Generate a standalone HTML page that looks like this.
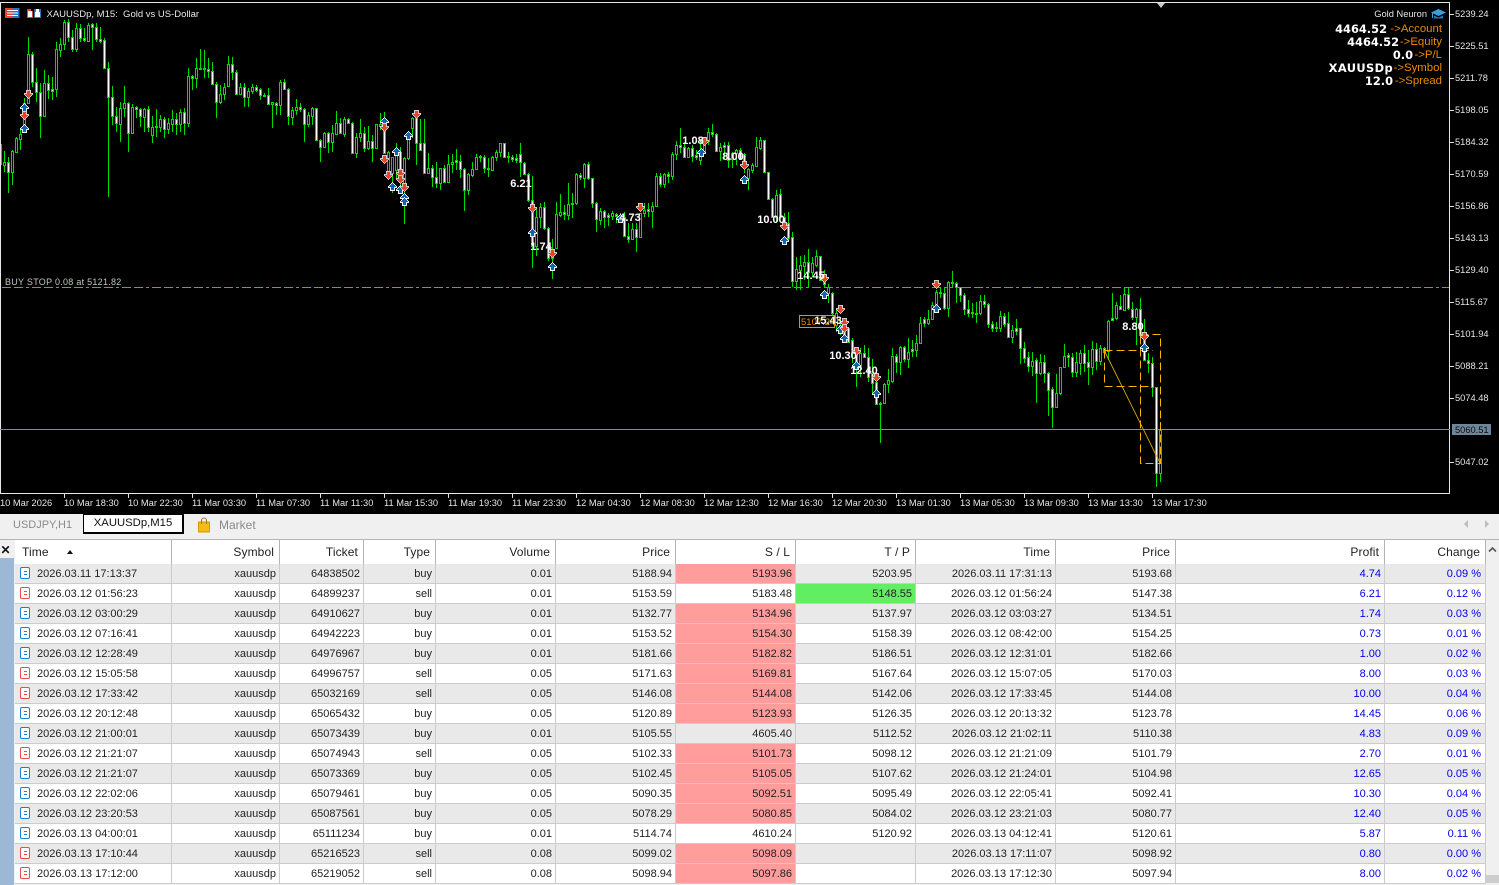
<!DOCTYPE html>
<html><head><meta charset="utf-8"><title>XAUUSDp M15</title>
<style>
html,body{margin:0;padding:0;width:1499px;height:885px;overflow:hidden;background:#f0f0f0;font-family:"Liberation Sans",Arial,sans-serif}
#chart{position:absolute;left:0;top:0}
svg text{font-family:"Liberation Sans",Arial,sans-serif}
.tab{position:absolute;font-size:11px;line-height:14px}
#active{position:absolute;left:83px;top:514px;width:98px;height:17px;background:#fff;border:1px solid #000;border-right-width:2px;border-bottom-width:2px;text-align:center;font-size:11.3px;line-height:17px;color:#111}
#side{position:absolute;left:0;top:558px;width:14px;height:327px;background:#9cb8d6}
#x{position:absolute;left:0;top:540px;width:11px;text-align:center;font-size:12px;font-weight:bold;color:#111;line-height:20px;margin-left:0}
#tblwrap{position:absolute;left:15px;top:539px;width:1471px;height:346px;overflow:hidden}
table{border-collapse:separate;border-spacing:0;table-layout:fixed;width:1471px;font-size:11px;color:#222}
th{height:24px;padding:0 5px 0 0;border-top:1px solid #b4b4b4;border-right:1px solid #b4b4b4;background:#fff;font-weight:normal;font-size:12px;letter-spacing:.1px;text-align:right;color:#222;box-sizing:content-box}
td{height:17px;padding:2px 3px 0 0;border-right:1px solid #ccc;border-bottom:1px solid #ccc;text-align:right;white-space:nowrap;line-height:17px;overflow:hidden}
tr:nth-child(odd) td{background:#e9e9e9}
tr:nth-child(even) td{background:#fff}
td.t{text-align:left;padding-left:22px;position:relative}
td.c{padding-right:4px}
th.t{text-align:left;padding-left:7px;position:relative}
th.t:after{content:"";position:absolute;left:52px;top:10px;border-left:3px solid transparent;border-right:3px solid transparent;border-bottom:4px solid #111}
i{position:absolute;left:5px;top:3px;width:8px;height:10px;border:1.5px solid #1e7fd0;border-radius:2px;background:#fff}
i:before,i:after{content:"";position:absolute;left:2.5px;width:3px;height:1px;background:#1e7fd0}
i:before{top:3px}i:after{top:6px}
i.r{border-color:#e84a4a}i.r:before,i.r:after{background:#e84a4a}
tr td.s{background:#ff9c9c}
tr td.g{background:#62ee62}
td.b{color:#0000f0}
#sb{position:absolute;left:1486px;top:540px;width:13px;height:345px;background:#f0f0f0}
#sb b{position:absolute;left:0;top:335px;width:13px;height:8px;background:#cdcdcd}
</style></head><body>
<svg id="chart" width="1499" height="514" viewBox="0 0 1499 514">
<defs>
<g id="up" shape-rendering="crispEdges"><path d="M0-4H1V-3H2V-2H3V-1H4V0H5V2H3V5H-2V2H-4V0H-3V-1H-2V-2H-1V-3H0Z" fill="#eef2fa"/><path d="M0-3H1V-2H2V-1H3V0H4V1H2V4H-1V1H-3V0H-2V-1H-1V-2H0Z" fill="#1565ad"/></g>
<g id="dn" shape-rendering="crispEdges"><path d="M-2-4H3V-1H5V1H4V2H3V3H2V4H1V5H0V4H-1V3H-2V2H-3V1H-4V-1H-2Z" fill="#d8ccc8"/><path d="M-1-3H2V0H4V1H3V2H2V3H1V4H0V3H-1V2H-2V1H-3V0H-1Z" fill="#e4472a"/></g>
</defs>
<rect width="1499" height="514" fill="#000"/>
<path d="M.5 2.5H1449.5V493.5H.5Z" fill="none" stroke="#e6e6e6"/>
<path d="M0 429.5H1450" stroke="#7e8a94" fill="none"/>
<path d="M2 287.5H1449" stroke="#28c828" stroke-dasharray="9 3 9 3 3 3" fill="none"/>
<g shape-rendering="crispEdges" fill="none" stroke="#00dc00">
<path d="M1.5 144V165M4.5 151V172M8.5 157V193M12.5 150V185M16.5 137V152M20.5 130V150M24.5 98V132M28.5 37V103M32.5 52V87M36.5 68V102M40.5 83V138M44.5 70V117M48.5 75V99M52.5 77V100M56.5 42V97M60.5 38V57M64.5 20V50M68.5 19V42M72.5 30V52M76.5 23V52M80.5 24V42M84.5 28V42M88.5 23V42M92.5 23V50M96.5 23V42M100.5 27V43M104.5 38V68M108.5 62V197M112.5 86V125M116.5 107V132M120.5 102V142M124.5 86V117M128.5 102V152M132.5 104V133M136.5 106V118M140.5 108V127M144.5 108V132M148.5 106V132M152.5 116V143M156.5 109V137M160.5 115V132M164.5 117V138M168.5 118V134M172.5 110V132M176.5 113V135M180.5 109V132M184.5 108V135M188.5 68V127M192.5 75V90M196.5 58V88M200.5 49V70M204.5 50V78M208.5 58V78M212.5 62V85M216.5 82V118M220.5 85V104M224.5 83V100M228.5 56V87M232.5 57V80M236.5 70V95M240.5 83V95M244.5 83V107M248.5 88V107M252.5 84V94M256.5 85V92M260.5 88V100M264.5 93V97M268.5 88V105M272.5 102V128M276.5 102V115M280.5 80V115M284.5 79V90M288.5 88V125M292.5 107V125M296.5 99V115M300.5 103V112M304.5 108V142M308.5 112V127M312.5 107V125M316.5 108V141M320.5 139V162M324.5 132V148M328.5 132V153M332.5 125V152M336.5 111V134M340.5 118V133M344.5 117V137M348.5 118V124M352.5 122V153M356.5 133V158M360.5 119V142M364.5 127V152M368.5 126V150M372.5 135V162M376.5 125V149M380.5 113V130M384.5 112V153M388.5 151V180M392.5 157V193M396.5 143V180M400.5 147V190M404.5 157V224M408.5 132V160M412.5 117V138M416.5 112V165M420.5 119V151M424.5 119V173M428.5 153V173M432.5 165V187M436.5 162V188M440.5 168V190M444.5 165V183M448.5 155V182M452.5 154V173M456.5 149V170M460.5 155V178M464.5 168V211M468.5 173V195M472.5 162V177M476.5 154V170M480.5 155V162M484.5 155V173M488.5 158V177M492.5 156V171M496.5 150V161M500.5 143V157M504.5 143V157M508.5 152V163M512.5 155V162M516.5 154V163M520.5 143V177M524.5 162V175M528.5 173V202M532.5 176V268M536.5 207V256M540.5 203V228M544.5 202V230M548.5 227V261M552.5 239V279M556.5 202V248M560.5 194V217M564.5 205V220M568.5 183V220M572.5 193V218M576.5 173V205M580.5 173V180M584.5 163V188M588.5 162V180M592.5 178V208M596.5 202V232M600.5 208V225M604.5 210V228M608.5 213V226M612.5 211V220M616.5 213V223M620.5 213V222M624.5 212V237M628.5 223V243M632.5 223V240M636.5 223V252M640.5 213V238M644.5 203V217M648.5 203V217M652.5 202V228M656.5 173V207M660.5 173V187M664.5 173V188M668.5 172V183M672.5 152V180M676.5 141V160M680.5 128V153M684.5 142V158M688.5 147V158M692.5 145V162M696.5 150V160M700.5 140V165M704.5 140V153M708.5 128V145M712.5 124V137M716.5 133V152M720.5 143V161M724.5 142V159M728.5 142V168M732.5 152V168M736.5 149V165M740.5 148V160M744.5 153V173M748.5 168V190M752.5 163V173M756.5 137V166M760.5 137V150M764.5 140V172M768.5 172V200M772.5 198V218M776.5 190V222M780.5 189V218M784.5 213V230M788.5 212V242M792.5 232V287M796.5 257V290M800.5 256V290M804.5 255V280M808.5 249V288M812.5 257V277M816.5 250V267M820.5 256V280M824.5 270V287M828.5 284V303M832.5 292V315M836.5 308V332M840.5 318V335M844.5 323V342M848.5 327V343M852.5 338V363M856.5 350V387M860.5 348V377M864.5 345V358M868.5 348V382M872.5 359V393M876.5 377V405M880.5 402V443M884.5 383V404M888.5 369V393M892.5 348V383M896.5 354V373M900.5 346V375M904.5 346V362M908.5 338V368M912.5 340V357M916.5 335V357M920.5 317V343M924.5 317V327M928.5 310V325M932.5 302V320M936.5 290V310M940.5 288V298M944.5 288V310M948.5 281V317M952.5 271V288M956.5 282V303M960.5 287V302M964.5 293V315M968.5 300V317M972.5 303V318M976.5 302V323M980.5 295V315M984.5 295V308M988.5 303V328M992.5 321V332M996.5 322V332M1000.5 311V332M1004.5 313V327M1008.5 312V338M1012.5 325V343M1016.5 319V335M1020.5 328V364M1024.5 342V363M1028.5 352V372M1032.5 352V376M1036.5 358V403M1040.5 354V375M1044.5 355V383M1048.5 372V416M1052.5 387V428M1056.5 374V408M1060.5 367V395M1064.5 344V367M1068.5 353V367M1072.5 353V377M1076.5 352V377M1080.5 350V375M1084.5 345V372M1088.5 350V385M1092.5 341V375M1096.5 343V370M1100.5 345V365M1104.5 347V357M1108.5 320V360M1112.5 293V321M1116.5 302V320M1120.5 295V310M1124.5 287V311M1128.5 287V310M1132.5 302V320M1136.5 308V345M1140.5 298V335M1144.5 319V360M1148.5 353V373M1152.5 357V397M1156.5 387V487M1160.5 422V482"/>
<path fill="#000" d="M3.5 162.5h2v3h-2zM11.5 151.5h2v21h-2zM15.5 138.5h2v14h-2zM19.5 134.5h2v5h-2zM23.5 103.5h2v25h-2zM27.5 54.5h2v49h-2zM43.5 83.5h2v33h-2zM55.5 49.5h2v40h-2zM59.5 44.5h2v6h-2zM63.5 22.5h2v22h-2zM75.5 28.5h2v21h-2zM87.5 25.5h2v16h-2zM119.5 108.5h2v16h-2zM123.5 103.5h2v5h-2zM131.5 107.5h2v26h-2zM143.5 109.5h2v8h-2zM151.5 127.5h2v8h-2zM159.5 119.5h2v8h-2zM167.5 123.5h2v6h-2zM171.5 119.5h2v5h-2zM179.5 112.5h2v12h-2zM187.5 76.5h2v47h-2zM195.5 68.5h2v10h-2zM219.5 94.5h2v8h-2zM223.5 87.5h2v7h-2zM227.5 64.5h2v22h-2zM239.5 87.5h2v7h-2zM247.5 91.5h2v6h-2zM251.5 87.5h2v4h-2zM271.5 102.5h2v2h-2zM279.5 82.5h2v23h-2zM291.5 110.5h2v7h-2zM295.5 107.5h2v3h-2zM307.5 115.5h2v9h-2zM311.5 108.5h2v8h-2zM323.5 133.5h2v14h-2zM331.5 133.5h2v9h-2zM335.5 123.5h2v11h-2zM343.5 119.5h2v15h-2zM355.5 137.5h2v16h-2zM359.5 133.5h2v4h-2zM367.5 141.5h2v7h-2zM375.5 124.5h2v24h-2zM379.5 124.5h2v2h-2zM387.5 152.5h2v23h-2zM391.5 157.5h2v16h-2zM395.5 152.5h2v18h-2zM403.5 158.5h2v29h-2zM407.5 135.5h2v23h-2zM411.5 118.5h2v10h-2zM427.5 168.5h2v5h-2zM439.5 168.5h2v15h-2zM447.5 164.5h2v18h-2zM451.5 162.5h2v2h-2zM467.5 174.5h2v16h-2zM471.5 169.5h2v6h-2zM475.5 157.5h2v12h-2zM491.5 157.5h2v13h-2zM495.5 152.5h2v5h-2zM499.5 143.5h2v9h-2zM535.5 217.5h2v29h-2zM539.5 207.5h2v10h-2zM555.5 214.5h2v34h-2zM559.5 212.5h2v3h-2zM567.5 204.5h2v11h-2zM575.5 174.5h2v29h-2zM583.5 164.5h2v14h-2zM599.5 211.5h2v9h-2zM611.5 213.5h2v3h-2zM631.5 229.5h2v10h-2zM639.5 213.5h2v24h-2zM643.5 210.5h2v3h-2zM651.5 206.5h2v5h-2zM655.5 176.5h2v30h-2zM663.5 174.5h2v10h-2zM671.5 154.5h2v22h-2zM675.5 145.5h2v9h-2zM687.5 148.5h2v9h-2zM699.5 150.5h2v10h-2zM703.5 143.5h2v8h-2zM707.5 132.5h2v9h-2zM719.5 147.5h2v4h-2zM731.5 153.5h2v6h-2zM735.5 150.5h2v3h-2zM747.5 169.5h2v9h-2zM751.5 165.5h2v5h-2zM755.5 147.5h2v19h-2zM759.5 140.5h2v8h-2zM775.5 195.5h2v22h-2zM795.5 269.5h2v12h-2zM799.5 265.5h2v5h-2zM803.5 262.5h2v4h-2zM811.5 263.5h2v9h-2zM815.5 256.5h2v9h-2zM827.5 287.5h2v6h-2zM835.5 313.5h2v12h-2zM859.5 353.5h2v13h-2zM883.5 384.5h2v19h-2zM887.5 380.5h2v4h-2zM891.5 356.5h2v25h-2zM899.5 347.5h2v15h-2zM907.5 352.5h2v7h-2zM915.5 343.5h2v7h-2zM919.5 323.5h2v20h-2zM927.5 319.5h2v4h-2zM931.5 305.5h2v14h-2zM935.5 292.5h2v13h-2zM947.5 282.5h2v26h-2zM979.5 301.5h2v12h-2zM999.5 316.5h2v12h-2zM1011.5 330.5h2v7h-2zM1031.5 361.5h2v5h-2zM1039.5 362.5h2v11h-2zM1055.5 393.5h2v14h-2zM1059.5 367.5h2v26h-2zM1063.5 356.5h2v11h-2zM1075.5 362.5h2v10h-2zM1079.5 353.5h2v10h-2zM1091.5 349.5h2v18h-2zM1099.5 348.5h2v13h-2zM1107.5 321.5h2v30h-2zM1115.5 305.5h2v13h-2zM1123.5 294.5h2v16h-2zM1135.5 309.5h2v8h-2zM1159.5 430.5h2v43h-2z"/>
<path fill="#fff" d="M7.5 162.5h2v10h-2zM31.5 54.5h2v28h-2zM35.5 82.5h2v10h-2zM39.5 92.5h2v24h-2zM47.5 83.5h2v7h-2zM51.5 89.5h2v2h-2zM67.5 22.5h2v15h-2zM71.5 37.5h2v12h-2zM79.5 28.5h2v10h-2zM83.5 38.5h2v2h-2zM91.5 24.5h2v3h-2zM95.5 27.5h2v12h-2zM99.5 39.5h2v2h-2zM103.5 40.5h2v28h-2zM107.5 68.5h2v29h-2zM111.5 97.5h2v19h-2zM115.5 116.5h2v7h-2zM127.5 103.5h2v30h-2zM135.5 107.5h2v2h-2zM139.5 109.5h2v7h-2zM147.5 109.5h2v18h-2zM155.5 126.5h2v1h-2zM163.5 119.5h2v10h-2zM175.5 119.5h2v5h-2zM183.5 112.5h2v11h-2zM191.5 76.5h2v2h-2zM199.5 68.5h2v1h-2zM203.5 68.5h2v1h-2zM207.5 69.5h2v2h-2zM211.5 71.5h2v13h-2zM215.5 84.5h2v18h-2zM231.5 64.5h2v8h-2zM235.5 72.5h2v22h-2zM243.5 87.5h2v10h-2zM255.5 87.5h2v3h-2zM259.5 89.5h2v6h-2zM263.5 95.5h2v1h-2zM267.5 95.5h2v9h-2zM275.5 103.5h2v2h-2zM283.5 82.5h2v7h-2zM287.5 89.5h2v27h-2zM299.5 107.5h2v2h-2zM303.5 109.5h2v15h-2zM315.5 108.5h2v32h-2zM319.5 140.5h2v7h-2zM327.5 133.5h2v9h-2zM339.5 123.5h2v10h-2zM347.5 119.5h2v4h-2zM351.5 123.5h2v30h-2zM363.5 133.5h2v15h-2zM371.5 141.5h2v7h-2zM383.5 126.5h2v27h-2zM399.5 152.5h2v21h-2zM415.5 115.5h2v28h-2zM419.5 143.5h2v7h-2zM423.5 143.5h2v30h-2zM431.5 168.5h2v9h-2zM435.5 177.5h2v6h-2zM443.5 168.5h2v14h-2zM455.5 160.5h2v2h-2zM459.5 161.5h2v8h-2zM463.5 169.5h2v21h-2zM479.5 156.5h2v1h-2zM483.5 157.5h2v11h-2zM487.5 168.5h2v1h-2zM503.5 143.5h2v14h-2zM507.5 156.5h2v1h-2zM511.5 157.5h2v2h-2zM515.5 158.5h2v2h-2zM519.5 154.5h2v8h-2zM523.5 163.5h2v11h-2zM527.5 174.5h2v26h-2zM531.5 200.5h2v46h-2zM543.5 207.5h2v21h-2zM547.5 228.5h2v30h-2zM551.5 257.5h2v1h-2zM563.5 212.5h2v2h-2zM571.5 203.5h2v1h-2zM579.5 175.5h2v2h-2zM587.5 164.5h2v14h-2zM591.5 178.5h2v25h-2zM595.5 203.5h2v16h-2zM603.5 211.5h2v6h-2zM607.5 215.5h2v2h-2zM615.5 214.5h2v2h-2zM619.5 215.5h2v1h-2zM623.5 217.5h2v19h-2zM627.5 236.5h2v3h-2zM635.5 229.5h2v8h-2zM647.5 209.5h2v2h-2zM659.5 176.5h2v8h-2zM667.5 174.5h2v2h-2zM679.5 145.5h2v2h-2zM683.5 147.5h2v10h-2zM691.5 148.5h2v8h-2zM695.5 155.5h2v2h-2zM711.5 132.5h2v2h-2zM715.5 134.5h2v17h-2zM723.5 145.5h2v2h-2zM727.5 145.5h2v15h-2zM739.5 150.5h2v9h-2zM743.5 154.5h2v14h-2zM763.5 140.5h2v32h-2zM767.5 172.5h2v27h-2zM771.5 199.5h2v18h-2zM779.5 194.5h2v23h-2zM783.5 217.5h2v6h-2zM787.5 223.5h2v15h-2zM791.5 237.5h2v44h-2zM807.5 262.5h2v10h-2zM819.5 256.5h2v24h-2zM823.5 280.5h2v4h-2zM831.5 293.5h2v20h-2zM839.5 325.5h2v7h-2zM843.5 328.5h2v10h-2zM847.5 328.5h2v14h-2zM851.5 340.5h2v13h-2zM855.5 353.5h2v10h-2zM863.5 353.5h2v4h-2zM867.5 357.5h2v20h-2zM871.5 373.5h2v10h-2zM875.5 382.5h2v22h-2zM879.5 403.5h2v1h-2zM895.5 356.5h2v6h-2zM903.5 347.5h2v12h-2zM911.5 349.5h2v2h-2zM923.5 319.5h2v4h-2zM939.5 292.5h2v1h-2zM943.5 293.5h2v15h-2zM951.5 282.5h2v1h-2zM955.5 283.5h2v4h-2zM959.5 287.5h2v8h-2zM963.5 295.5h2v14h-2zM967.5 309.5h2v4h-2zM971.5 312.5h2v1h-2zM975.5 313.5h2v1h-2zM983.5 301.5h2v3h-2zM987.5 304.5h2v20h-2zM991.5 324.5h2v4h-2zM995.5 327.5h2v1h-2zM1003.5 316.5h2v8h-2zM1007.5 323.5h2v14h-2zM1015.5 328.5h2v3h-2zM1019.5 328.5h2v20h-2zM1023.5 348.5h2v10h-2zM1027.5 357.5h2v9h-2zM1035.5 360.5h2v13h-2zM1043.5 362.5h2v11h-2zM1047.5 373.5h2v17h-2zM1051.5 389.5h2v18h-2zM1067.5 355.5h2v2h-2zM1071.5 357.5h2v15h-2zM1083.5 353.5h2v10h-2zM1087.5 362.5h2v5h-2zM1095.5 349.5h2v12h-2zM1103.5 348.5h2v4h-2zM1111.5 318.5h2v2h-2zM1119.5 306.5h2v3h-2zM1127.5 294.5h2v14h-2zM1131.5 309.5h2v8h-2zM1139.5 309.5h2v26h-2zM1143.5 335.5h2v25h-2zM1147.5 360.5h2v3h-2zM1151.5 363.5h2v24h-2zM1155.5 387.5h2v86h-2z"/>
</g>
<path d="M1104.5 350.5H1153M1104.5 350.5V386.5H1152M1140.5 334.5H1160.5V463.5H1140.5V334.5" fill="none" stroke="#f5b800" stroke-dasharray="8 4" shape-rendering="crispEdges"/>
<path d="M1104 350L1160 463" stroke="#e8b000" stroke-width=".85" fill="none"/>
<g>
<use href="#up" x="24" y="107"/><use href="#up" x="24" y="128"/><use href="#up" x="384" y="121"/><use href="#up" x="396" y="151"/><use href="#up" x="392" y="186"/><use href="#up" x="400" y="189"/><use href="#up" x="404" y="197"/><use href="#up" x="404" y="201"/><use href="#up" x="408" y="135"/>
<use href="#up" x="532" y="232"/><use href="#up" x="552" y="266"/><use href="#up" x="620" y="218"/><use href="#up" x="701" y="152"/><use href="#up" x="744" y="179"/><use href="#up" x="784" y="240"/><use href="#up" x="824" y="294"/><use href="#up" x="840" y="329"/><use href="#up" x="844" y="338"/><use href="#up" x="856" y="365"/><use href="#up" x="876" y="393"/><use href="#up" x="936" y="308"/><use href="#up" x="1144" y="347"/>
<use href="#dn" x="28" y="94"/><use href="#dn" x="24" y="115"/><use href="#dn" x="384" y="127"/><use href="#dn" x="384" y="159"/><use href="#dn" x="388" y="175"/><use href="#dn" x="400" y="173"/><use href="#dn" x="400" y="179"/><use href="#dn" x="404" y="187"/><use href="#dn" x="416" y="114"/>
<use href="#dn" x="532" y="208"/><use href="#dn" x="552" y="253"/><use href="#dn" x="640" y="207"/><use href="#dn" x="704" y="141"/><use href="#dn" x="744" y="165"/><use href="#dn" x="784" y="226"/><use href="#dn" x="824" y="278"/><use href="#dn" x="840" y="309"/><use href="#dn" x="844" y="322"/><use href="#dn" x="844" y="328"/><use href="#dn" x="856" y="351"/><use href="#dn" x="876" y="377"/><use href="#dn" x="936" y="284"/><use href="#dn" x="1144" y="336"/>
</g>
<rect x="799.5" y="315.5" width="35" height="12" fill="none" stroke="#e89000"/>
<text x="801" y="325" font-size="9.5" fill="#e89000">5107.24</text>
<g font-size="11" fill="#fff" font-weight="bold" text-anchor="middle">
<text x="521" y="187">6.21</text><text x="541" y="250">1.74</text><text x="630" y="221">4.73</text><text x="693" y="144">1.08</text><text x="733" y="160">8.00</text><text x="771" y="223">10.00</text><text x="811" y="279">14.45</text><text x="828" y="324">15.43</text><text x="843" y="359">10.30</text><text x="864" y="374">12.40</text><text x="1133" y="330">8.80</text>
</g>
<text x="5" y="285" font-size="9" letter-spacing=".27" fill="#c4c4c4">BUY STOP 0.08 at 5121.82</text>
<path d="M1157 3h8l-4 5z" fill="#c8c8c8"/>
<g shape-rendering="crispEdges">
<rect x="5" y="8" width="7.5" height="10" fill="#e84030"/><rect x="12.5" y="8" width="7" height="10" fill="#2a72c0"/>
<path d="M7 10.5h11M7 13h11M7 15.5h11" stroke="#fff" fill="none"/>
<path d="M27 9h4v2h2v7h-6z" fill="#e84030"/><path d="M34 9h7v9h-7z" fill="#2a72c0"/><rect x="28" y="11" width="4" height="6" fill="#fff"/><rect x="35" y="12" width="5" height="5" fill="#fff"/><rect x="36" y="9" width="3" height="3" fill="#fff"/>
</g>
<text x="46.5" y="17" font-size="9.5" fill="#e8e8e8" xml:space="preserve">XAUUSDp, M15:  Gold vs US-Dollar</text>
<text x="1427" y="17" font-size="9.3" fill="#e8e8e8" text-anchor="end">Gold Neuron</text>
<path d="M1431 12.5l7.5-3.5 7.5 3.5-7.5 3.5z" fill="#3a9ee0"/><path d="M1434 15.5v3h9v-3l-4.5 2z" fill="#1f78c4"/><path d="M1432.5 13v5" stroke="#3a9ee0"/>
<g font-weight="bold" font-size="11.4" fill="#fff" text-anchor="end">
<text x="1387" y="33" style="font-family:'DejaVu Sans',sans-serif">4464.52</text><text x="1399" y="46" style="font-family:'DejaVu Sans',sans-serif">4464.52</text><text x="1413" y="59" style="font-family:'DejaVu Sans',sans-serif">0.0</text><text x="1393" y="72" letter-spacing=".4" style="font-family:'DejaVu Sans',sans-serif">XAUUSDp</text><text x="1393" y="85" style="font-family:'DejaVu Sans',sans-serif">12.0</text>
</g>
<g font-size="11.4" fill="#e88c00" text-anchor="end">
<text x="1442" y="32">-&gt;Account</text><text x="1442" y="45">-&gt;Equity</text><text x="1442" y="58">-&gt;P/L</text><text x="1442" y="71">-&gt;Symbol</text><text x="1442" y="84">-&gt;Spread</text>
</g>
<path d="M1450 14.5h4M1450 46.5h4M1450 78.5h4M1450 110.5h4M1450 142.5h4M1450 174.5h4M1450 206.5h4M1450 238.5h4M1450 270.5h4M1450 302.5h4M1450 334.5h4M1450 366.5h4M1450 398.5h4M1450 462.5h4M64.5 494v4M128.5 494v4M192.5 494v4M256.5 494v4M320.5 494v4M384.5 494v4M448.5 494v4M512.5 494v4M576.5 494v4M640.5 494v4M704.5 494v4M768.5 494v4M832.5 494v4M896.5 494v4M960.5 494v4M1024.5 494v4M1088.5 494v4M1152.5 494v4" stroke="#e0e0e0" fill="none"/>
<rect x="1452" y="424" width="39" height="11" fill="#6f8599"/>
<g font-size="9.3" fill="#e6e6e6">
<text x="1455" y="17">5239.24</text><text x="1455" y="49">5225.51</text><text x="1455" y="81">5211.78</text><text x="1455" y="113">5198.05</text><text x="1455" y="145">5184.32</text><text x="1455" y="177">5170.59</text><text x="1455" y="209">5156.86</text><text x="1455" y="241">5143.13</text><text x="1455" y="273">5129.40</text><text x="1455" y="305">5115.67</text><text x="1455" y="337">5101.94</text><text x="1455" y="369">5088.21</text><text x="1455" y="401">5074.48</text><text x="1455" y="433" fill="#0c0c0c">5060.51</text><text x="1455" y="465">5047.02</text>
<text x="0" y="506">10 Mar 2026</text><text x="64" y="506">10 Mar 18:30</text><text x="128" y="506">10 Mar 22:30</text><text x="192" y="506">11 Mar 03:30</text><text x="256" y="506">11 Mar 07:30</text><text x="320" y="506">11 Mar 11:30</text><text x="384" y="506">11 Mar 15:30</text><text x="448" y="506">11 Mar 19:30</text><text x="512" y="506">11 Mar 23:30</text><text x="576" y="506">12 Mar 04:30</text><text x="640" y="506">12 Mar 08:30</text><text x="704" y="506">12 Mar 12:30</text><text x="768" y="506">12 Mar 16:30</text><text x="832" y="506">12 Mar 20:30</text><text x="896" y="506">13 Mar 01:30</text><text x="960" y="506">13 Mar 05:30</text><text x="1024" y="506">13 Mar 09:30</text><text x="1088" y="506">13 Mar 13:30</text><text x="1152" y="506">13 Mar 17:30</text>
</g>
</svg>

<div class="tab" style="left:13px;top:518px;color:#8a8a8a">USDJPY,H1</div>
<div id="active">XAUUSDp,M15</div>
<svg style="position:absolute;left:197px;top:517px" width="14" height="16" viewBox="0 0 14 16"><path d="M1.5 5h11v10h-11z" fill="#f5bb10" stroke="#d89a00"/><path d="M4.5 7V3.5a2.5 2.5 0 0 1 5 0V7" fill="none" stroke="#9a7a20"/></svg>
<div class="tab" style="left:219px;top:518px;color:#8a8a8a;font-size:12px">Market</div>
<svg style="position:absolute;left:1462px;top:519px" width="30" height="10"><path d="M6 1v8L2 5z" fill="#bdbdbd"/><path d="M23 1v8l4-4z" fill="#bdbdbd"/></svg>
<div style="position:absolute;left:0;top:539px;width:1499px;height:1px;background:#b4b4b4"></div>
<div id="side"></div>
<div id="x">✕</div>
<div id="tblwrap">
<table>
<colgroup><col style="width:157px"><col style="width:108px"><col style="width:84px"><col style="width:72px"><col style="width:120px"><col style="width:120px"><col style="width:120px"><col style="width:120px"><col style="width:140px"><col style="width:120px"><col style="width:209px"><col style="width:101px"></colgroup>
<thead><tr><th class="t">Time</th><th>Symbol</th><th>Ticket</th><th>Type</th><th>Volume</th><th>Price</th><th>S / L</th><th>T / P</th><th>Time</th><th>Price</th><th>Profit</th><th>Change</th></tr></thead>
<tbody>
<tr><td class="t"><i></i>2026.03.11 17:13:37</td><td>xauusdp</td><td>64838502</td><td>buy</td><td>0.01</td><td>5188.94</td><td class="s">5193.96</td><td>5203.95</td><td>2026.03.11 17:31:13</td><td>5193.68</td><td class="b">4.74</td><td class="b c">0.09 %</td></tr>
<tr><td class="t"><i class="r"></i>2026.03.12 01:56:23</td><td>xauusdp</td><td>64899237</td><td>sell</td><td>0.01</td><td>5153.59</td><td>5183.48</td><td class="g">5148.55</td><td>2026.03.12 01:56:24</td><td>5147.38</td><td class="b">6.21</td><td class="b c">0.12 %</td></tr>
<tr><td class="t"><i></i>2026.03.12 03:00:29</td><td>xauusdp</td><td>64910627</td><td>buy</td><td>0.01</td><td>5132.77</td><td class="s">5134.96</td><td>5137.97</td><td>2026.03.12 03:03:27</td><td>5134.51</td><td class="b">1.74</td><td class="b c">0.03 %</td></tr>
<tr><td class="t"><i></i>2026.03.12 07:16:41</td><td>xauusdp</td><td>64942223</td><td>buy</td><td>0.01</td><td>5153.52</td><td class="s">5154.30</td><td>5158.39</td><td>2026.03.12 08:42:00</td><td>5154.25</td><td class="b">0.73</td><td class="b c">0.01 %</td></tr>
<tr><td class="t"><i></i>2026.03.12 12:28:49</td><td>xauusdp</td><td>64976967</td><td>buy</td><td>0.01</td><td>5181.66</td><td class="s">5182.82</td><td>5186.51</td><td>2026.03.12 12:31:01</td><td>5182.66</td><td class="b">1.00</td><td class="b c">0.02 %</td></tr>
<tr><td class="t"><i class="r"></i>2026.03.12 15:05:58</td><td>xauusdp</td><td>64996757</td><td>sell</td><td>0.05</td><td>5171.63</td><td class="s">5169.81</td><td>5167.64</td><td>2026.03.12 15:07:05</td><td>5170.03</td><td class="b">8.00</td><td class="b c">0.03 %</td></tr>
<tr><td class="t"><i class="r"></i>2026.03.12 17:33:42</td><td>xauusdp</td><td>65032169</td><td>sell</td><td>0.05</td><td>5146.08</td><td class="s">5144.08</td><td>5142.06</td><td>2026.03.12 17:33:45</td><td>5144.08</td><td class="b">10.00</td><td class="b c">0.04 %</td></tr>
<tr><td class="t"><i></i>2026.03.12 20:12:48</td><td>xauusdp</td><td>65065432</td><td>buy</td><td>0.05</td><td>5120.89</td><td class="s">5123.93</td><td>5126.35</td><td>2026.03.12 20:13:32</td><td>5123.78</td><td class="b">14.45</td><td class="b c">0.06 %</td></tr>
<tr><td class="t"><i></i>2026.03.12 21:00:01</td><td>xauusdp</td><td>65073439</td><td>buy</td><td>0.01</td><td>5105.55</td><td>4605.40</td><td>5112.52</td><td>2026.03.12 21:02:11</td><td>5110.38</td><td class="b">4.83</td><td class="b c">0.09 %</td></tr>
<tr><td class="t"><i class="r"></i>2026.03.12 21:21:07</td><td>xauusdp</td><td>65074943</td><td>sell</td><td>0.05</td><td>5102.33</td><td class="s">5101.73</td><td>5098.12</td><td>2026.03.12 21:21:09</td><td>5101.79</td><td class="b">2.70</td><td class="b c">0.01 %</td></tr>
<tr><td class="t"><i></i>2026.03.12 21:21:07</td><td>xauusdp</td><td>65073369</td><td>buy</td><td>0.05</td><td>5102.45</td><td class="s">5105.05</td><td>5107.62</td><td>2026.03.12 21:24:01</td><td>5104.98</td><td class="b">12.65</td><td class="b c">0.05 %</td></tr>
<tr><td class="t"><i></i>2026.03.12 22:02:06</td><td>xauusdp</td><td>65079461</td><td>buy</td><td>0.05</td><td>5090.35</td><td class="s">5092.51</td><td>5095.49</td><td>2026.03.12 22:05:41</td><td>5092.41</td><td class="b">10.30</td><td class="b c">0.04 %</td></tr>
<tr><td class="t"><i></i>2026.03.12 23:20:53</td><td>xauusdp</td><td>65087561</td><td>buy</td><td>0.05</td><td>5078.29</td><td class="s">5080.85</td><td>5084.02</td><td>2026.03.12 23:21:03</td><td>5080.77</td><td class="b">12.40</td><td class="b c">0.05 %</td></tr>
<tr><td class="t"><i></i>2026.03.13 04:00:01</td><td>xauusdp</td><td>65111234</td><td>buy</td><td>0.01</td><td>5114.74</td><td>4610.24</td><td>5120.92</td><td>2026.03.13 04:12:41</td><td>5120.61</td><td class="b">5.87</td><td class="b c">0.11 %</td></tr>
<tr><td class="t"><i class="r"></i>2026.03.13 17:10:44</td><td>xauusdp</td><td>65216523</td><td>sell</td><td>0.08</td><td>5099.02</td><td class="s">5098.09</td><td></td><td>2026.03.13 17:11:07</td><td>5098.92</td><td class="b">0.80</td><td class="b c">0.00 %</td></tr>
<tr><td class="t"><i class="r"></i>2026.03.13 17:12:00</td><td>xauusdp</td><td>65219052</td><td>sell</td><td>0.08</td><td>5098.94</td><td class="s">5097.86</td><td></td><td>2026.03.13 17:12:30</td><td>5097.94</td><td class="b">8.00</td><td class="b c">0.02 %</td></tr>
</tbody></table>
</div>
<div id="sb"><svg style="position:absolute;left:2px;top:6px" width="10" height="7"><path d="M1 5.5L4.5 2 8 5.5" fill="none" stroke="#555" stroke-width="1.6"/></svg><b></b></div>
</body></html>
